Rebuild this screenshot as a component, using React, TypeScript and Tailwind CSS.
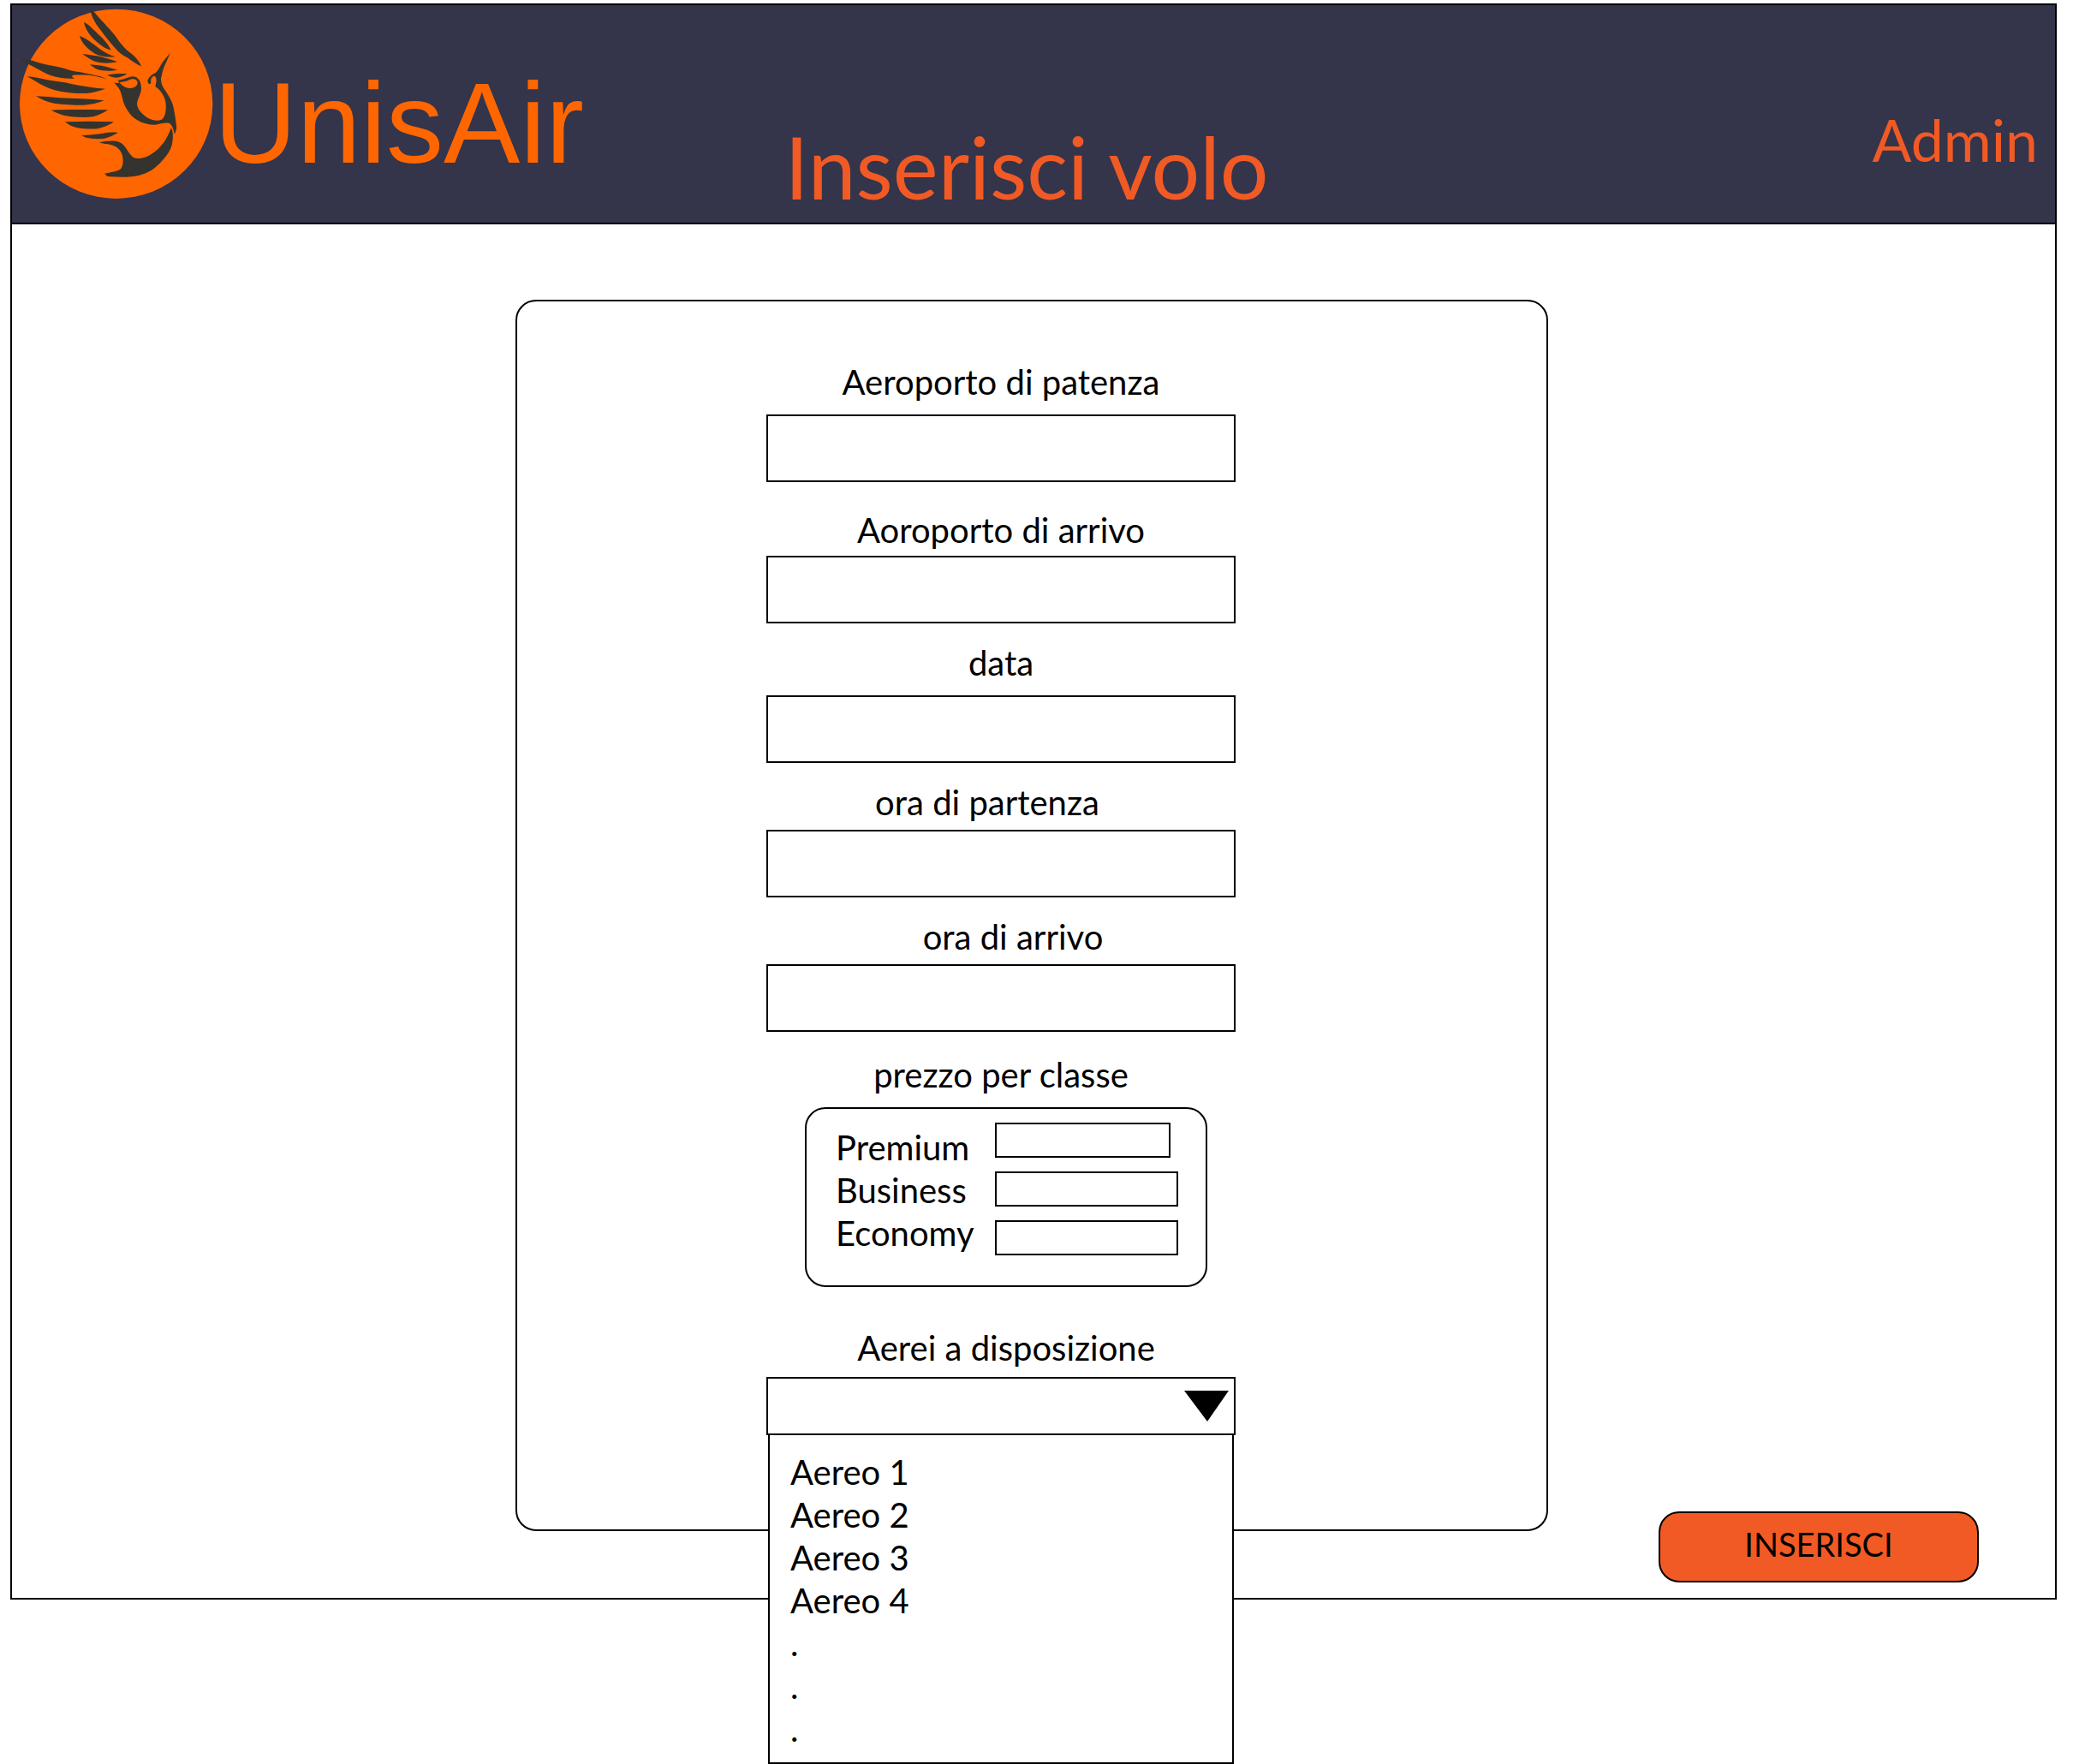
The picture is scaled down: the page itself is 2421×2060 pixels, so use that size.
import { useState } from "react";

const fields = [
  { id: "partenza", label: "Aeroporto di patenza", block: "", text: "mb-3.5" },
  { id: "arrivo", label: "Aoroporto di arrivo", block: "mt-8", text: "mb-1.5" },
  { id: "data", label: "data", block: "mt-[22px]", text: "mb-3.5" },
  { id: "ora-partenza", label: "ora di partenza", block: "mt-[22px]", text: "mb-2 pr-8" },
  { id: "ora-arrivo", label: "ora di arrivo", block: "mt-[22px]", text: "mb-2 pl-7" },
];

const classes = [
  { id: "premium", label: "Premium", width: "w-[205px]" },
  { id: "business", label: "Business", width: "w-[214px]" },
  { id: "economy", label: "Economy", width: "w-[214px]" },
];

const planes = ["Aereo 1", "Aereo 2", "Aereo 3", "Aereo 4"];

function BirdLogo() {
  return (
    <svg viewBox="66 30 684 672" className="h-56 w-[228px] shrink-0" aria-hidden="true">
      <ellipse cx="407" cy="364" rx="338" ry="332" fill="#ff6600" />
      <g fill="#35332e">
        <path d="M316 33 C324 38 332 43 340 54 C360 78 392 108 408 131 C424 155 442 175 458 186 C474 198 488 214 495 232 C478 226 460 212 446 202 C430 193 416 184 405 170 C384 147 366 124 350 102 C336 84 321 62 316 33 Z" />
        <path d="M294 77 C310 84 322 98 336 112 C354 129 376 148 389 176 C372 172 350 158 333 141 C316 124 299 104 294 77 Z" />
        <path d="M279 126 C296 132 310 142 324 152 C346 168 366 186 404 199 C380 201 352 198 333 188 C310 174 287 154 279 126 Z" />
        <path d="M288 189 C306 191 322 193 340 196 C362 200 386 209 411 216 C388 222 360 223 338 217 C318 211 306 200 288 189 Z" />
        <path d="M315 226 C336 228 352 229 370 233 C384 237 398 242 412 244 C394 250 372 249 352 246 C336 243 326 236 315 226 Z" />
        <path d="M375 263 C392 259 420 257 446 259 C434 265 424 271 410 272 C396 272 386 267 375 263 Z" />
        <path d="M70 204 C92 206 112 212 134 219 C162 228 196 232 224 239 C242 245 260 250 278 252 C300 257 330 262 352 268 L376 278 C352 270 334 267 322 265 C302 262 278 263 254 263 L253 270 L262 275 C232 277 204 273 180 265 C160 259 144 248 124 238 C106 228 88 218 70 204 Z" />
        <path d="M94 268 C118 269 142 275 166 280 C196 285 226 288 250 294 C284 301 324 308 369 311 C348 318 328 325 302 327 C270 328 240 325 212 320 C184 315 162 306 140 294 C126 286 110 276 94 268 Z" />
        <path d="M126 337 C154 338 182 341 210 343 C258 345 312 346 365 352 C344 360 320 368 290 368 C256 368 222 366 190 362 C166 358 146 349 126 337 Z" />
        <path d="M179 386 C230 383 320 384 378 385 C364 395 346 404 326 409 C296 413 260 411 232 406 C212 402 196 394 179 386 Z" />
        <path d="M227 427 C284 425 342 425 399 427 C384 438 364 446 342 451 C318 453 290 451 268 447 C252 443 238 436 227 427 Z" />
        <path d="M285 475 C312 472 340 471 362 467 C380 463 396 463 414 464 C400 472 386 480 366 485 C346 488 316 486 302 482 C296 480 290 478 285 475 Z" />
        <path
          fillRule="evenodd"
          d="M399 288 C406 291 412 292 418 288 L412 281 C430 281 446 271 464 268 C482 268 494 282 495 308 C495 330 482 344 480 364 C482 386 500 402 518 413 C534 422 552 425 566 419 C580 408 582 388 581 366 C580 342 566 318 544 303 L548 284 C548 272 544 264 538 267 C528 272 528 282 529 292 C524 297 518 292 517 284 C520 272 530 262 544 256 C556 246 562 228 574 212 L595 187 C590 204 578 226 572 242 C568 254 568 262 564 274 C564 288 566 298 574 310 C590 334 606 356 610 388 C614 408 616 424 619 449 L612 471 C608 454 604 440 594 432 C580 428 562 434 544 437 C518 438 494 430 476 418 C456 404 442 382 434 362 C428 344 426 324 416 309 Z M418 288 C428 300 438 308 454 309 C470 309 482 302 482 288 C480 278 468 274 454 279 C442 286 430 288 418 288 Z"
        />
        <path d="M599 448 C606 456 608 478 603 504 C598 526 586 544 568 563 C544 590 520 606 488 614 C456 622 416 621 376 618 L366 608 C386 604 406 602 420 594 C432 584 433 562 428 542 C422 524 408 512 388 507 C376 504 360 505 347 499 C368 494 400 490 418 498 C442 508 448 538 468 552 C480 558 496 555 512 550 C542 536 566 514 582 486 C590 472 596 460 599 448 Z" />
      </g>
    </svg>
  );
}

export default function App() {
  const [plane, setPlane] = useState("");

  return (
    <div className="min-h-screen bg-white pt-1 pr-[19px] pl-3 font-[Lato,'Open_Sans',sans-serif] text-[40px] leading-12 text-black">
      <div className="border-2 border-black">
        <header className="grid h-64 grid-cols-[1fr_auto_1fr] border-b-2 border-black bg-[#34344b]">
          <div className="flex items-start pt-1 pl-2">
            <BirdLogo />
            <span className="pt-11 font-['Liberation_Sans_Narrow','Arial_Narrow','Liberation_Sans',sans-serif] text-[134px] leading-[180px] text-[#ff6600]">
              UnisAir
            </span>
          </div>
          <h1 className="self-end pr-4 pb-2.5 text-[100px] leading-[112px] text-[#f15a24]">Inserisci volo</h1>
          <a href="#admin" className="justify-self-end pt-[117px] pr-5 text-[68px] leading-20 text-[#f15a24]">
            Admin
          </a>
        </header>

        <form className="grid grid-cols-[1fr_1206px_1fr] pt-[88px] pr-1" onSubmit={(e) => e.preventDefault()}>
          <div className="col-start-2 mb-[78px] flex flex-col items-center rounded-3xl border-2 border-black pt-[70px] pr-18 pb-[110px]">
            {fields.map((f) => (
              <div key={f.id} className={`flex w-[548px] flex-col ${f.block}`}>
                <label htmlFor={f.id} className={`text-center ${f.text}`}>
                  {f.label}
                </label>
                <input id={f.id} type="text" className="h-[79px] border-2 border-black px-4 outline-none" />
              </div>
            ))}

            <fieldset className="mt-[26px] ml-3 w-[470px]">
              <legend className="mx-auto mb-3.5 pr-3">prezzo per classe</legend>
              <div className="flex h-[210px] gap-7 rounded-3xl border-2 border-black pl-[34px]">
                <div className="flex w-[158px] flex-col pt-5 leading-[50px]">
                  {classes.map((c) => (
                    <label key={c.id} htmlFor={c.id}>
                      {c.label}
                    </label>
                  ))}
                </div>
                <div className="flex flex-col gap-4 pt-4">
                  {classes.map((c) => (
                    <input
                      key={c.id}
                      id={c.id}
                      type="text"
                      className={`h-[41px] border-2 border-black px-2 text-2xl outline-none ${c.width}`}
                    />
                  ))}
                </div>
              </div>
            </fieldset>

            <div className="mt-[47px] flex w-[548px] flex-col">
              <label htmlFor="aereo" className="mb-2.5 pl-3 text-center">
                Aerei a disposizione
              </label>
              <div className="relative">
                <select
                  id="aereo"
                  value={plane}
                  onChange={(e) => setPlane(e.target.value)}
                  className="block h-17 w-full appearance-none border-2 border-black bg-white px-4 outline-none"
                >
                  <option value=""></option>
                  {planes.map((p) => (
                    <option key={p}>{p}</option>
                  ))}
                </select>
                <svg
                  viewBox="0 0 52 36"
                  className="pointer-events-none absolute top-4 right-2 h-9 w-13"
                  aria-hidden="true"
                >
                  <path d="M0 0H52L27 36Z" />
                </svg>
                <ul
                  role="listbox"
                  aria-label="Aerei a disposizione"
                  className="absolute inset-x-0.5 top-full -mt-0.5 border-2 border-black bg-white pt-[18px] pb-3.5 pl-6 leading-[50px]"
                >
                  {planes.map((p) => (
                    <li key={p} role="option" aria-selected={plane === p} onClick={() => setPlane(p)}>
                      {p}
                    </li>
                  ))}
                  <li role="presentation">.</li>
                  <li role="presentation">.</li>
                  <li role="presentation">.</li>
                </ul>
              </div>
            </div>
          </div>

          <button
            type="submit"
            className="mr-[85px] mb-[18px] h-[83px] w-[374px] self-end justify-self-end rounded-3xl border-2 border-black bg-[#f15a24] pb-2 text-[38px]"
          >
            INSERISCI
          </button>
        </form>
      </div>
    </div>
  );
}
